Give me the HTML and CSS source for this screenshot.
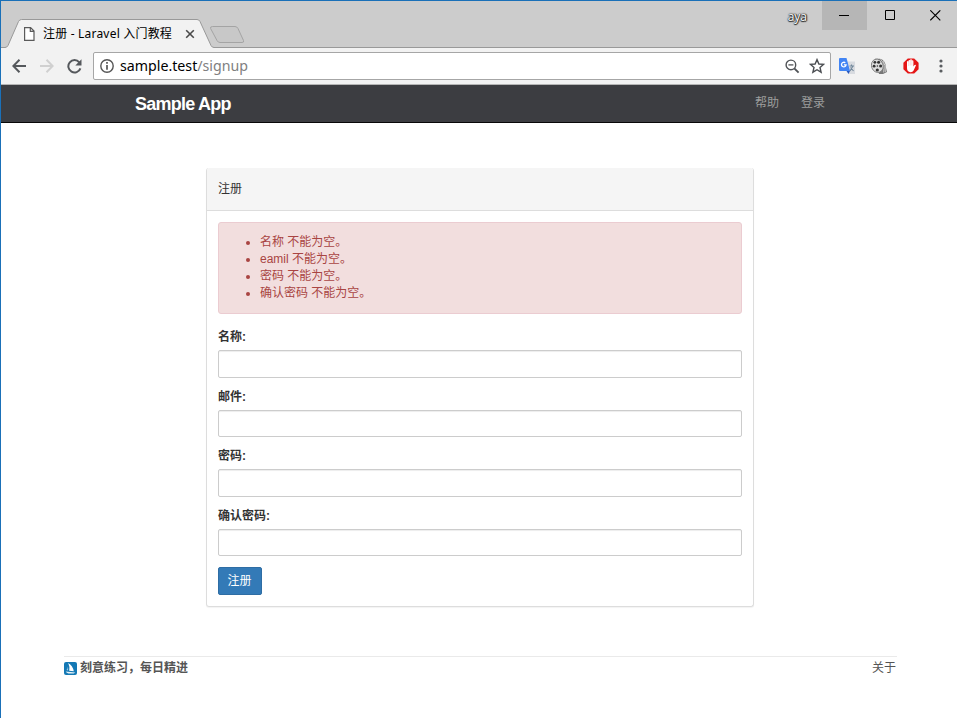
FILE: index.html
```html
<!DOCTYPE html>
<html lang="zh-CN">
<head>
<meta charset="utf-8">
<title>注册 - Laravel 入门教程</title>
<link rel="stylesheet" href="styles.css">
</head>
<body>
<div class="window">
  <div class="titlebar">
    <div class="tab">
      <svg class="tab-shape" width="240" height="29" viewBox="0 0 240 29">
        <path d="M0 28.500H4Q6 28.500 7 26.500L17.500 2.500Q18.500 .5 20.500 .5H196Q198 .5 199 2.500L210 26.500Q211 28.500 213 28.500H240V29H0Z" fill="#f2f2f2"/>
        <path d="M0 28.500H4Q6 28.500 7 26.500L17.500 2.500Q18.500 .5 20.500 .5H196Q198 .5 199 2.500L210 26.500Q211 28.500 213 28.500H240" fill="none" stroke="#999"/>
        <path d="M211.500 7.500H234Q236 7.500 237 9.500L242.500 21.500Q243.300 23.500 241 23.500H219Q217 23.500 216 21.500L209.600 9.500Q209 7.500 211.500 7.500Z" fill="#c8c8c8" stroke="#a4a4a4"/>
      </svg>
      <svg class="doc-icon" width="12" height="14" viewBox="0 0 12 14"><path d="M.6 .6H6.600L10 4V13.400H.6ZM6.300 .6V4.400H10" fill="#fff" stroke="#5a5a5a" stroke-width="1.200"/></svg>
      <span class="tab-title">注册 - Laravel 入门教程</span>
      <svg class="tab-close" width="10" height="10" viewBox="0 0 10 10"><path d="M1.200 1.200L8.800 8.800M8.800 1.200L1.200 8.800" stroke="#4a4a4a" stroke-width="1.600"/></svg>
    </div>
    <div class="controls">
      <span class="profile">aya</span>
      <span class="control minimize"><svg width="11" height="11" viewBox="0 0 11 11"><path d="M0 5.500H10" stroke="#000"/></svg></span>
      <span class="control"><svg width="11" height="11" viewBox="0 0 11 11"><path d="M.5 .5H9.500V9.500H.5Z" fill="none" stroke="#000"/></svg></span>
      <span class="control"><svg width="11" height="11" viewBox="0 0 11 11"><path d="M.3 .3L10.300 10.300M10.300 .3L.3 10.300" stroke="#000" stroke-width="1.100"/></svg></span>
    </div>
  </div>
  <div class="toolbar">
    <svg class="back" width="14" height="14" viewBox="0 0 14 14"><path d="M14 7H1.500M7.500 .8L1.300 7L7.500 13.200" fill="none" stroke="#55585c" stroke-width="2"/></svg>
    <svg class="forward" width="14" height="14" viewBox="0 0 14 14"><path d="M0 7H12.500M6.500 .8L12.700 7L6.500 13.200" fill="none" stroke="#d0d0d0" stroke-width="2"/></svg>
    <svg class="reload" width="15" height="15" viewBox="0 0 15 15"><path d="M12.300 3.300A6.200 6.200 0 1 0 13.400 9.300" fill="none" stroke="#55585c" stroke-width="2"/><path d="M14.500 .3V6.500H8.300Z" fill="#55585c"/></svg>
    <div class="address">
      <svg width="14" height="14" viewBox="0 0 14 14"><circle cx="7" cy="7" r="6.200" fill="none" stroke="#555" stroke-width="1.400"/><path d="M7 6V10.800M7 3V4.800" stroke="#555" stroke-width="1.700"/></svg>
      <span class="url">sample.test<span class="path">/signup</span></span>
      <svg class="magnify" width="15" height="15" viewBox="0 0 15 15"><circle cx="5.900" cy="5.900" r="4.800" fill="none" stroke="#505357" stroke-width="1.400"/><path d="M9.300 9.300L13.600 13.600" stroke="#505357" stroke-width="1.900"/><path d="M3.400 5.900H8.400" stroke="#505357" stroke-width="1.300"/></svg>
      <svg class="star" width="16" height="16" viewBox="0 0 16 16"><path d="M8 1.600L9.900 6L14.500 6.400L11 9.500L12.100 14.200L8 11.700L3.900 14.200L5 9.500L1.500 6.400L6.100 6Z" fill="none" stroke="#4b4e52" stroke-width="1.400"/></svg>
    </div>
    <svg class="ext translate" width="17" height="17" viewBox="0 0 17 17"><path d="M6 3.500H16V16H10Z" fill="#d8dbe0"/><path d="M10.500 8H15M12.500 6.500V8M11 13L14 8M11.500 9.500L14.500 13" stroke="#71879a" stroke-width="1.100" fill="none"/><path d="M1 0H7.500L11 13H1Q0 13 0 12V1Q0 0 1 0Z" fill="#4285f4"/><path d="M7.500 13H11L9.500 16Z" fill="#2656bd"/><path d="M6.300 4.800A2.300 2.300 0 1 0 7.100 6.800H4.900" fill="none" stroke="#fff" stroke-width="1.300"/></svg>
    <svg class="ext reel" width="17" height="17" viewBox="0 0 17 17"><path d="M4 .8H9Q14.500 2 14.800 9L16 14L12 16H8Z" fill="#777"/><path d="M9.500 1.500Q14 5 12.700 14.500M12 3Q15 7 14.300 14" stroke="#ccc" fill="none"/><ellipse cx="6.300" cy="7.800" rx="5.800" ry="6.800" fill="#ddd" stroke="#777" stroke-width=".8" transform="rotate(-20 6.300 7.800)"/><g fill="#333"><circle cx="3.900" cy="4.300" r="1.400"/><circle cx="7.600" cy="4.300" r="1.500"/><circle cx="3.100" cy="8.200" r="1.400"/><circle cx="9.600" cy="8" r="1.500"/><circle cx="6.300" cy="12" r="1.600"/><circle cx="6.400" cy="8" r=".8"/></g></svg>
    <svg class="ext block" width="16" height="16" viewBox="0 0 16 16"><path d="M4.800 .4H11.200L15.600 4.800V11.200L11.200 15.600H4.800L.4 11.200V4.800Z" fill="#e51616"/><path d="M4 9V3.500Q4.800 2.700 5.600 3.500V2.300Q6.500 1.500 7.200 2.300V1.600Q8.200 1 8.800 1.600V2.500Q9.800 1.900 10.400 2.700V8.500L11.500 7Q12.800 6.400 13 7.200L10.600 12.500Q9.500 14.400 7.500 14.200Q4 14 4 10Z" fill="#fff"/><path d="M5.700 3V8M7.300 2V7.500M8.900 2V7.500" stroke="#f2b8b8" stroke-width=".5"/></svg>
    <svg class="more" width="4" height="14" viewBox="0 0 4 14"><g fill="#5a5d61"><circle cx="2" cy="2" r="1.600"/><circle cx="2" cy="7" r="1.600"/><circle cx="2" cy="12" r="1.600"/></g></svg>
  </div>
  <header class="navbar">
    <a class="brand">Sample App</a>
    <nav class="links"><a>帮助</a><a>登录</a></nav>
  </header>
  <main class="page">
    <section class="panel">
      <h5 class="panel-heading">注册</h5>
      <div class="panel-body">
        <ul class="alert">
          <li>名称 不能为空。</li>
          <li>eamil 不能为空。</li>
          <li>密码 不能为空。</li>
          <li>确认密码 不能为空。</li>
        </ul>
        <form>
          <div class="group"><label for="name">名称:</label><input id="name" type="text"></div>
          <div class="group"><label for="email">邮件:</label><input id="email" type="text"></div>
          <div class="group"><label for="password">密码:</label><input id="password" type="password"></div>
          <div class="group"><label for="confirm">确认密码:</label><input id="confirm" type="password"></div>
          <button class="submit" type="button">注册</button>
        </form>
      </div>
    </section>
    <footer class="footer">
      <svg width="13" height="13" viewBox="0 0 13 13"><rect width="13" height="13" rx="2" fill="#1479b5"/><path d="M4.200 1Q8.700 3.500 9.800 9.300L5.200 8.700Q6 4.500 4.200 1Z" fill="#fff"/><path d="M3.900 4.500Q4.400 6.500 4 8.400L2.500 8.100Q3.700 6.500 3.900 4.500Z" fill="#9fcbe3"/><path d="M1.700 9.500L11.300 10.500L9.700 11.500H4.500Q2.500 11.100 1.700 9.500Z" fill="#e4f1f8"/></svg>
      <span class="slogan">刻意练习，每日精进</span>
      <a class="about">关于</a>
    </footer>
  </main>
</div>
</body>
</html>
```
FILE: styles.css
```css
* { box-sizing: border-box; }
body {
  margin: 0;
  background: #fff;
  color: #333;
  font: 12px/17px "Liberation Sans", "Noto Sans CJK SC", sans-serif;
  overflow: hidden;
}
svg { display: block; flex: none; }
.window {
  height: 718px;
  border-top: 1px solid #1a70b8;
  border-left: 1px solid #1a70b8;
}
.titlebar {
  display: flex;
  justify-content: space-between;
  height: 47px;
  background: #ccc;
  border-bottom: 1px solid #999;
}
.tab {
  position: relative;
  display: flex;
  align-items: center;
  width: 213px;
  height: 29px;
  margin-top: 18px;
  padding-left: 23px;
}
.tab-shape { position: absolute; left: 0; top: 0; overflow: visible; }
.doc-icon, .tab-title, .tab-close { position: relative; }
.tab-title {
  width: 139px;
  margin-left: 7px;
  color: #000;
  font: 12px/18px "Noto Sans", "Noto Sans CJK SC", sans-serif;
  letter-spacing: .2px;
  white-space: nowrap;
}
.tab-close { margin-left: 3px; }
.controls { display: flex; height: 29px; }
.profile {
  margin-right: 15px;
  color: #fff;
  font: 12px/32px "Open Sans", sans-serif;
  text-shadow: 0 0 1px #222, 0 0 2px #222, 0 1px 1px #222, 1px 0 1px #444;
}
.control {
  display: flex;
  width: 46px;
  align-items: center;
  justify-content: center;
}
.control:last-child { width: 44px; padding-left: 1px; }
.minimize { width: 45px; background: #b6b6b6; }
.toolbar {
  display: flex;
  align-items: center;
  height: 37px;
  padding: 0 13px 0 11px;
  background: #f2f2f2;
  border-bottom: 1px solid #b5b5b5;
}
.forward { margin-left: 14px; }
.reload { margin-left: 13px; }
.address {
  display: flex;
  align-items: center;
  width: 738px;
  height: 28px;
  margin-left: 11px;
  padding: 0 5px 0 6px;
  background: #fff;
  border: 1px solid #a6a6a6;
  border-radius: 2px;
}
.url {
  flex: 1;
  margin-left: 6px;
  color: #000;
  font: 14.2px/24px "Noto Sans", sans-serif;
}
.path { color: #808080; }
.star { margin-left: 9px; }
.translate { margin-left: 8px; }
.reel { margin-left: 15px; }
.block { margin-left: 15px; }
.more { margin-left: 20px; }
.navbar {
  display: flex;
  justify-content: space-between;
  height: 38px;
  padding: 0 132px 0 134px;
  background: #3c3d41;
  border-bottom: 1px solid #080808;
}
.brand {
  color: #fff;
  font: bold 18px/39px "Liberation Sans", sans-serif;
  letter-spacing: -0.77px;
}
.links { display: flex; gap: 22px; color: #9d9d9d; line-height: 37px; }
.page { padding-top: 45px; }
.panel {
  width: 548px;
  height: 439px;
  margin-left: 205px;
  border: 1px solid #ddd;
  border-top: 0;
  border-radius: 3px;
  box-shadow: 0 1px 1px rgba(0, 0, 0, .05);
}
.panel-heading {
  height: 43px;
  margin: 0;
  padding: 13px 11px 12px;
  background: #f5f5f5;
  border-bottom: 1px solid #ddd;
  border-radius: 3px 3px 0 0;
  font-size: 12px;
  font-weight: 400;
}
.panel-body { padding: 11px; }
.alert {
  height: 92px;
  margin: 0 0 14px;
  padding: 11px 0 0 41px;
  background: #f2dede;
  border: 1px solid #ebccd1;
  border-radius: 3px;
  color: #a94442;
}
.group { height: 59.65px; }
label { display: block; height: 22px; padding-top: 1px; font-weight: 700; }
input {
  display: block;
  width: 100%;
  height: 27.5px;
  border: 1px solid #ccc;
  border-radius: 2px;
  box-shadow: inset 0 1px 1px rgba(0, 0, 0, .075);
}
.submit {
  display: block;
  width: 44px;
  height: 28px;
  padding: 2px 1px 0 0;
  background: #337ab7;
  border: 1px solid #2e6da4;
  border-radius: 2px;
  color: #fff;
  font: 12px/17px "Liberation Sans", "Noto Sans CJK SC", sans-serif;
}
.footer {
  display: flex;
  width: 833px;
  margin: 49px 0 0 63px;
  padding-top: 3px;
  border-top: 1px solid #eaeaea;
  color: #555;
}
.footer svg { margin-top: 2px; }
.slogan { margin-left: 3px; font-weight: 700; }
.about { margin: 0 1px 0 auto; }
```
